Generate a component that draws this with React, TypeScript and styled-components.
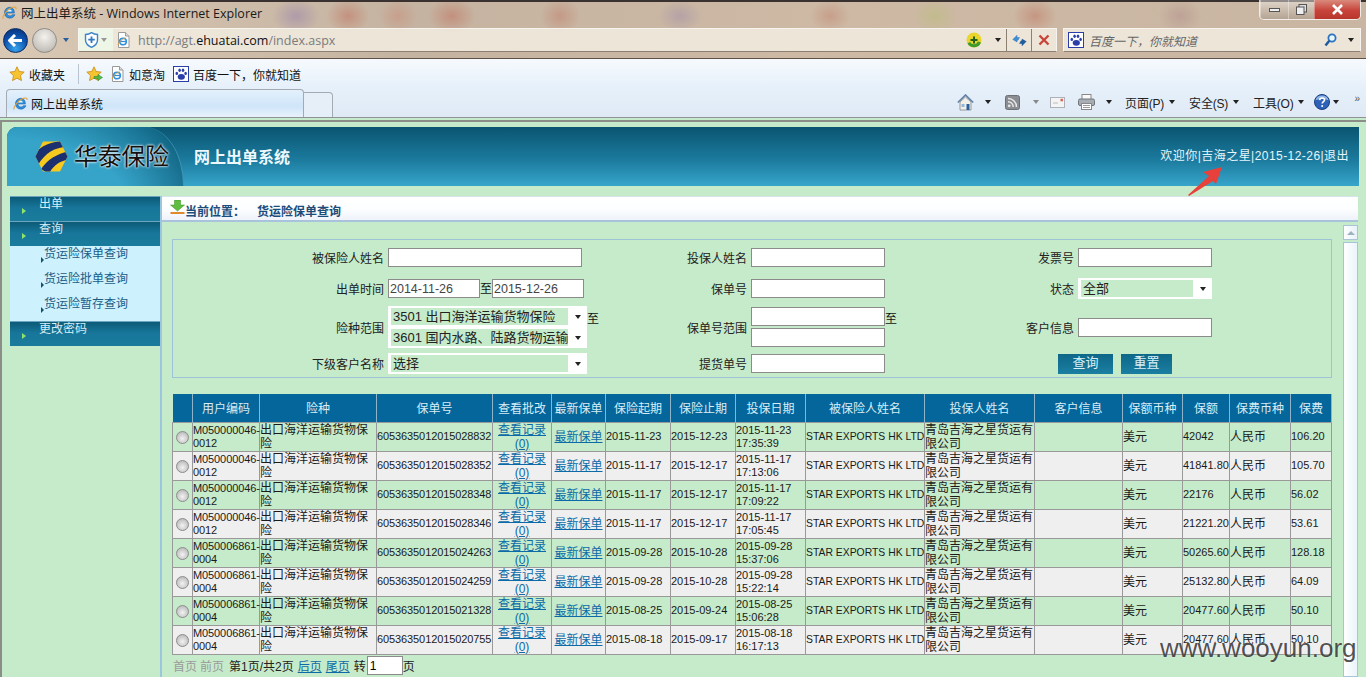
import React from 'react'
import styled, { createGlobalStyle } from 'styled-components'

const CJK = '"Liberation Sans", "Noto Sans CJK SC", sans-serif'

const GlobalStyle = createGlobalStyle`
  html, body {
    margin: 0;
    padding: 0;
    background: #c6ebca;
    overflow: hidden;
  }
  * {
    box-sizing: border-box;
  }
`

const Screen = styled.div`
  position: relative;
  width: 1366px;
  height: 677px;
  overflow: hidden;
  display: flex;
  flex-direction: column;
  font-family: ${CJK};
  font-size: 12px;
  color: #111;
`

/* ---------- browser chrome ---------- */

const AeroArea = styled.div`
  height: 59px;
  border-top: 2px solid #3a3230;
  border-bottom: 1px solid #5e5248;
  display: flex;
  flex-direction: column;
  background:
    radial-gradient(ellipse 24px 18px at 296px 14px, rgba(150, 130, 170, 0.55), transparent),
    radial-gradient(ellipse 22px 18px at 348px 14px, rgba(190, 110, 90, 0.5), transparent),
    radial-gradient(ellipse 20px 18px at 398px 14px, rgba(200, 130, 110, 0.4), transparent),
    radial-gradient(ellipse 24px 18px at 452px 14px, rgba(190, 110, 90, 0.5), transparent),
    radial-gradient(ellipse 20px 18px at 560px 14px, rgba(190, 120, 100, 0.45), transparent),
    radial-gradient(ellipse 22px 16px at 680px 14px, rgba(150, 130, 170, 0.4), transparent),
    radial-gradient(ellipse 20px 16px at 830px 14px, rgba(190, 120, 100, 0.4), transparent),
    radial-gradient(ellipse 22px 18px at 935px 14px, rgba(185, 190, 120, 0.5), transparent),
    radial-gradient(ellipse 22px 18px at 1035px 14px, rgba(190, 110, 90, 0.45), transparent),
    radial-gradient(ellipse 22px 18px at 1180px 14px, rgba(170, 130, 130, 0.4), transparent),
    linear-gradient(90deg, #d9c8b4 0%, #c5b3a1 30%, #cdb9a4 60%, #c9b6a2 100%);
`

const TitleRow = styled.div`
  height: 24px;
  display: flex;
  align-items: flex-start;
  padding-left: 2px;
`

const TitleMain = styled.div`
  display: flex;
  align-items: center;
  height: 21px;
  gap: 4px;
  font-family: "Open Sans", "Noto Sans CJK SC", sans-serif;
  font-size: 12.5px;
  color: #1a1a1a;
`

const WindowButtons = styled.div`
  margin-left: auto;
  margin-right: 5px;
  margin-top: -2px;
  display: flex;
  height: 20px;
  border: 1px solid rgba(255, 255, 255, 0.75);
  border-top: none;
  border-radius: 0 0 5px 5px;
  overflow: hidden;
`

const WindowButton = styled.div<{ $w: number; $close?: boolean }>`
  width: ${({ $w }) => $w}px;
  display: flex;
  align-items: center;
  justify-content: center;
  border-left: 1px solid rgba(255, 255, 255, 0.35);
  background: ${({ $close }) =>
    $close
      ? 'linear-gradient(#d98a7c, #c8443a 55%, #b8362c)'
      : 'linear-gradient(rgba(255,255,255,0.45), rgba(160,145,130,0.5))'};
`

const NavRow = styled.div`
  height: 32px;
  display: flex;
  align-items: center;
  padding: 0 2px 4px 3px;
`

const RoundButton = styled.div<{ $grey?: boolean; $ml?: number }>`
  width: 25px;
  height: 25px;
  margin-left: ${({ $ml }) => $ml ?? 0}px;
  border-radius: 50%;
  display: flex;
  align-items: center;
  justify-content: center;
  border: 1px solid ${({ $grey }) => ($grey ? '#8f8c88' : '#0c2a66')};
  background: ${({ $grey }) =>
    $grey
      ? 'radial-gradient(circle at 50% 35%, #f4f2ee, #c6c2bc 70%, #a8a49e)'
      : 'radial-gradient(circle at 50% 85%, #38a4ea, #0c50ac 55%, #082c6c)'};
`

const Caret = styled.span<{ $ml?: number; $mr?: number; $c?: string }>`
  flex: none;
  width: 0;
  height: 0;
  margin-left: ${({ $ml }) => $ml ?? 0}px;
  margin-right: ${({ $mr }) => $mr ?? 0}px;
  border-left: 3.5px solid transparent;
  border-right: 3.5px solid transparent;
  border-top: 4px solid ${({ $c }) => $c ?? '#222'};
`

const AddressBox = styled.div`
  width: 979px;
  height: 24px;
  margin-left: 9px;
  display: flex;
  align-items: center;
  background: rgba(240, 234, 222, 0.9);
  border: 1px solid #fff9;
  border-bottom-color: #8d8072;
`

const ShieldCell = styled.div`
  width: 34px;
  height: 100%;
  display: flex;
  align-items: center;
  gap: 2px;
  padding-left: 5px;
  background: #eef6e8;
`

const UrlText = styled.span`
  margin-left: 7px;
  font-family: "Open Sans", sans-serif;
  font-size: 12.5px;
  color: #7b7b7b;

  b {
    font-weight: 400;
    color: #111;
  }
`

const AddressCell = styled.div<{ $w: number }>`
  width: ${({ $w }) => $w}px;
  height: 100%;
  display: flex;
  align-items: center;
  justify-content: center;
  border-left: 1px solid #8d8072;
`

const PlainSpot = styled.div`
  margin-left: auto;
  display: flex;
  align-items: center;
  gap: 13px;
  margin-right: 5px;
`

const SearchBox = styled.div`
  width: 298px;
  height: 24px;
  margin-left: 6px;
  display: flex;
  align-items: center;
  padding: 0 6px 0 4px;
  background: rgba(240, 234, 222, 0.9);
  border: 1px solid #fff9;
  border-bottom-color: #8d8072;
`

const SearchHint = styled.span`
  margin-left: 5px;
  font-style: italic;
  font-size: 12px;
  color: #666;
`

const SearchTools = styled.div`
  margin-left: auto;
  display: flex;
  align-items: center;
  gap: 11px;
`

const ToolArea = styled.div`
  height: 59px;
  display: flex;
  flex-direction: column;
  background: linear-gradient(#f6fafe, #e6f0fa 50%, #dfeaf6);
  border-bottom: 1px solid #8f9296;
`

const FavRow = styled.div`
  height: 30px;
  display: flex;
  align-items: center;
  padding-left: 9px;
`

const FavText = styled.span<{ $ml: number }>`
  margin-left: ${({ $ml }) => $ml}px;
  font-size: 12px;
  white-space: nowrap;
`

const FavIcon = styled.span<{ $ml?: number }>`
  display: flex;
  margin-left: ${({ $ml }) => $ml ?? 0}px;
`

const FavSep = styled.span`
  width: 1px;
  height: 20px;
  margin-left: 13px;
  background: #b9c4cf;
`

const TabRow = styled.div`
  flex: 1;
  display: flex;
  align-items: flex-end;
  padding-left: 6px;
`

const ActiveTab = styled.div`
  width: 298px;
  height: 28px;
  display: flex;
  align-items: center;
  gap: 3px;
  padding-left: 6px;
  border: 1px solid #a3aab2;
  border-bottom: none;
  border-radius: 4px 4px 0 0;
  background: linear-gradient(#e4f1fc, #cfe5f9 60%, #e8f2fb);
`

const NewTab = styled.div`
  width: 29px;
  height: 25px;
  border: 1px solid #a3aab2;
  border-bottom: none;
  border-left: none;
  border-radius: 0 4px 0 0;
  background: #e6eff8;
`

const CommandBar = styled.div`
  margin-left: auto;
  height: 100%;
  display: flex;
  align-items: center;
  padding: 0 6px 2px 0;
`

const CommandText = styled.span<{ $ml: number }>`
  margin-left: ${({ $ml }) => $ml}px;
  white-space: nowrap;
  font-size: 12px;
  letter-spacing: -0.2px;
  color: #222;
`

const More = styled.span`
  margin-left: 15px;
  margin-top: -8px;
  font-size: 10px;
  color: #555;
`

/* ---------- page ---------- */

const Page = styled.div`
  flex: 1;
  min-height: 0;
  margin-top: 2px;
  padding: 5px 7px 0 5px;
  border-top: 2px solid #8a8d88;
  border-left: 2px solid #8a8d88;
  background: #c6ebca;
  display: flex;
  flex-direction: column;
`

const Banner = styled.header`
  height: 59px;
  flex: none;
  display: flex;
  border-radius: 10px 0 0 0;
  overflow: hidden;
  background: linear-gradient(#0a5570, #1b7a9d 55%, #37a5ca);
`

const BannerLogo = styled.div`
  width: 177px;
  display: flex;
  align-items: center;
  padding-left: 28px;
  gap: 6px;
  background:
    radial-gradient(ellipse 210px 130px at 0 90px, #36a3c8 60%, transparent 99%),
    linear-gradient(100deg, #1a7fa3, #0f5f7d);
  border-right: 1px solid #3f96b6;
  border-radius: 0 40px 0 0 / 0 60px 0 0;
`

const LogoText = styled.span`
  font-size: 24px;
  line-height: 30px;
  letter-spacing: -0.3px;
  color: #111;
  text-shadow: 0 0 3px #fff, 0 0 2px #fff;
  white-space: nowrap;
`

const BannerTitle = styled.h1`
  margin: 0 0 1px 10px;
  align-self: center;
  font-size: 16px;
  font-weight: 700;
  color: #eef8fc;
`

const Welcome = styled.div`
  margin-left: auto;
  margin-right: 10px;
  margin-top: 22px;
  font-size: 12px;
  line-height: 14px;
  letter-spacing: 0.45px;
  color: #e6f5fb;
  white-space: nowrap;
`

const PageBody = styled.div`
  flex: 1;
  min-height: 0;
  margin-top: 10px;
  display: flex;
`

const Sidebar = styled.nav`
  width: 155px;
  flex: none;
  padding-left: 3px;
  border-right: 2px solid #9cc6de;
`

const NavItem = styled.div`
  height: 25px;
  display: flex;
  align-items: flex-start;
  gap: 13px;
  padding-left: 12px;
  color: #d7eef7;
  line-height: 14px;
  background: linear-gradient(#0c5a77, #17769a 45%, #1a7c9c);
  border-top: 1px solid #6ba5bf;
`

const NavBullet = styled.span`
  width: 0;
  height: 0;
  margin-top: 11px;
  border-top: 3px solid transparent;
  border-bottom: 3px solid transparent;
  border-left: 4px solid #8fe36a;
`

const SubMenu = styled.div`
  height: 75px;
  padding-top: 1px;
  background: #cdf2fe;
`

const SubItem = styled.div`
  height: 25px;
  display: flex;
  align-items: flex-start;
  padding-left: 31px;
  line-height: 14px;
  color: #1b5c86;
`

const SubBullet = styled.span`
  width: 0;
  height: 0;
  margin-top: 10px;
  border-top: 3px solid transparent;
  border-bottom: 3px solid transparent;
  border-left: 3px solid #16506e;
`

const Main = styled.main`
  width: 1196px;
  flex: none;
  display: flex;
  flex-direction: column;
`

const Breadcrumb = styled.div`
  height: 26px;
  flex: none;
  display: flex;
  align-items: center;
  padding: 3px 0 0 8px;
  background: linear-gradient(#fff, #fdfeff 50%, #eef3fa);
  border-bottom: 2px solid #a9c3dc;
  border-top: 1px solid #d5e4e6;
  font-weight: 700;
  color: #1c4c7a;
`

const CrumbLabel = styled.span`
  margin-right: 12px;
`

const MainRow = styled.div`
  flex: 1;
  min-height: 0;
  display: flex;
`

const Content = styled.div`
  width: 1181px;
  padding: 17px 0 0 10px;
`

const FormPanel = styled.div`
  width: 1160px;
  height: 139px;
  padding-top: 2px;
  border: 1px solid #9cc3d8;
  display: grid;
  grid-template-columns: 211px 262px 93px 249px 70px 1fr;
  grid-template-rows: 31px 31px 46px 27px;
  column-gap: 4px;
  align-items: center;
`

const Label = styled.label`
  text-align: right;
  white-space: nowrap;
  color: #222;
`

const TextInput = styled.input<{ $w: number }>`
  display: block;
  width: ${({ $w }) => $w}px;
  height: 19px;
  padding: 0 1px;
  border: 1px solid #8b8b8b;
  background: #fff;
  font-family: "Liberation Sans", sans-serif;
  font-size: 12.5px;
  color: #444;
  outline: none;
`

const FieldRow = styled.div`
  display: flex;
  align-items: center;
`

const FieldStack = styled.div<{ $gap?: number }>`
  display: flex;
  flex-direction: column;
  gap: ${({ $gap }) => $gap ?? 0}px;
`

const StackRow = styled.div`
  display: flex;
  align-items: center;
`

const ToMark = styled.span<{ $raised?: boolean }>`
  width: 12px;
  flex: none;
  line-height: 12px;
  margin-bottom: ${({ $raised }) => ($raised ? '16px' : '0')};
`

const SelectBox = styled.div<{ $w: number }>`
  width: ${({ $w }) => $w}px;
  height: 21px;
  flex: none;
  display: flex;
  align-items: center;
  padding: 2px 0 2px 3px;
  background: #fff;
`

const SelectValue = styled.div`
  flex: 1;
  height: 100%;
  padding-left: 2px;
  overflow: hidden;
  white-space: nowrap;
  font-size: 13px;
  line-height: 17px;
  background: #c6ebca;
  color: #222;
`

const SelectArrow = styled.div`
  width: 19px;
  flex: none;
  display: flex;
  justify-content: center;
`

const ButtonCell = styled.div`
  grid-column: 5 / span 2;
  display: flex;
  gap: 8px;
  padding-left: 54px;
`

const FormButton = styled.button<{ $w: number }>`
  width: ${({ $w }) => $w}px;
  height: 20px;
  padding: 0 0 2px;
  border: none;
  background: linear-gradient(#0f6788, #1a7fa2);
  font-family: ${CJK};
  font-size: 13px;
  line-height: 16px;
  color: #d9f0f8;
`

const Grid = styled.table`
  width: 1159px;
  margin: 16px 0 0 0;
  table-layout: fixed;
  border-collapse: collapse;
`

const HeadCell = styled.th`
  height: 28px;
  padding: 0 0 1px;
  background: #04669a;
  border-right: 1px solid #8db4cb;
  font-weight: 400;
  font-size: 12px;
  color: #d8edf7;
`

const DataRow = styled.tr<{ $even: boolean }>`
  height: 29px;
  background: ${({ $even }) => ($even ? '#f0eff0' : '#c6ebca')};
`

const Cell = styled.td<{ $center?: boolean }>`
  height: 29px;
  padding: 0;
  border: 1px solid #999;
  text-align: ${({ $center }) => ($center ? 'center' : 'left')};
  font-size: 12px;
  line-height: 14px;
  color: #1a1a1a;
`

const LatinCell = styled(Cell)<{ $size?: number; $tight?: boolean }>`
  font-family: "Liberation Sans", sans-serif;
  font-size: ${({ $size }) => $size ?? 11}px;
  line-height: 13px;
  letter-spacing: ${({ $tight }) => ($tight ? '-0.1px' : '0')};
  white-space: nowrap;
`

const RadioMark = styled.input`
  appearance: none;
  display: block;
  width: 13px;
  height: 13px;
  margin: 2px auto 0;
  border-radius: 50%;
  border: 1px solid #8e8e8e;
  background: radial-gradient(circle at 50% 60%, #f2f2f2, #c2c2c2 70%, #a8a8a8);
`

const TableLink = styled.a`
  color: #0c6aa6;
  text-decoration: underline;
  cursor: pointer;
`

const Pager = styled.div`
  height: 22px;
  margin-left: 1px;
  display: flex;
  align-items: center;
  color: #222;
  white-space: nowrap;
`

const PagerDim = styled.span<{ $mr: number }>`
  margin-right: ${({ $mr }) => $mr}px;
  color: #9a9a9a;
`

const PagerText = styled.span<{ $mr: number }>`
  margin-right: ${({ $mr }) => $mr}px;
`

const PagerLink = styled.a`
  margin-right: 4px;
  color: #0c6aa6;
  text-decoration: underline;
`

const PagerInput = styled.input`
  width: 36px;
  height: 19px;
  padding: 0 2px;
  border: 1px solid #8b8b8b;
  font-family: "Liberation Sans", sans-serif;
  font-size: 12px;
  outline: none;
`

const ScrollTrack = styled.div`
  width: 15px;
  margin-top: 3px;
  display: flex;
  flex-direction: column;
  gap: 2px;
`

const ScrollUp = styled.div`
  height: 15px;
  flex: none;
  display: flex;
  align-items: center;
  justify-content: center;
  border: 1px solid #a8c4d8;
  background: linear-gradient(90deg, #fff, #e7f1f8);
`

const UpMark = styled.span`
  width: 0;
  height: 0;
  border-left: 4px solid transparent;
  border-right: 4px solid transparent;
  border-bottom: 4px solid #9cb2bf;
`

const ScrollThumb = styled.div`
  flex: 1;
  border: 1px solid #a8c4d8;
  background: linear-gradient(90deg, #fff, #eaf4fb);
`

const PointerArrow = styled.svg`
  position: absolute;
  left: 1184px;
  top: 163px;
`

const Watermark = styled.div`
  position: absolute;
  left: 1160px;
  top: 633px;
  font-family: "Liberation Sans", sans-serif;
  font-size: 26px;
  line-height: 30px;
  color: rgba(50, 50, 50, 0.85);
  text-shadow: 0 0 2px rgba(255, 255, 255, 0.5);
`

/* ---------- drawings ---------- */

const IeIcon = ({ size = 15 }: { size?: number }) => (
  <svg width={size} height={size} viewBox="0 0 16 16">
    <path d="M13.2 8.6H5.2c.2 2 1.6 3 3.2 3 1.2 0 2-.5 2.6-1.3h2.8C13 12.600 10.900 14 8.400 14 5 14 2.600 11.600 2.600 8.300 2.600 5 5 2.400 8.400 2.400c3 0 4.900 2.400 4.800 6.200z" fill="#2f8fdc" stroke="#14569f" strokeWidth="0.5" />
    <path d="M5.300 6.800h5.100c-.1-1.300-1-2.100-2.500-2.100-1.400 0-2.400.9-2.600 2.100z" fill="#eef7ff" />
    <path d="M1 14.500C.2 12.500 5 4.500 11 2.500c3-1 4.500-.2 3.900 1.800" fill="none" stroke="#e9a02a" strokeWidth="1.100" />
  </svg>
)

const PageIcon = () => (
  <svg width="15" height="16" viewBox="0 0 15 16">
    <path d="M2.500 .5h7l3.500 3.500v11.500h-10.500z" fill="#fdfdfd" stroke="#9a9a9a" />
    <path d="M9.500 .5v3.500h3.500" fill="#dcdcdc" stroke="#9a9a9a" />
    <circle cx="7" cy="9.500" r="3.300" fill="none" stroke="#2f8fdc" strokeWidth="1.600" />
    <path d="M4 9.500h6" stroke="#2f8fdc" strokeWidth="1.200" />
    <path d="M2 13c1-3 5-7 8-7" fill="none" stroke="#e9a02a" strokeWidth="0.900" />
  </svg>
)

const StarIcon = ({ withArrow }: { withArrow?: boolean }) => (
  <svg width="17" height="16" viewBox="0 0 17 16">
    <path d="M8 .8l2.200 4.700 5 .6-3.700 3.500 1 5L8 12.200l-4.500 2.400 1-5L.8 6.100l5-.6z" fill="#f6c431" stroke="#c98a14" strokeWidth="0.800" />
    {withArrow && <path d="M8 10.500h4V8.500l4.500 3-4.500 3v-2H8z" fill="#55b848" stroke="#2d7f2a" strokeWidth="0.500" />}
  </svg>
)

const BaiduIcon = () => (
  <svg width="16" height="16" viewBox="0 0 16 16">
    <rect x=".5" y=".5" width="15" height="15" fill="#fff" stroke="#2a3ea8" />
    <ellipse cx="8.300" cy="10.800" rx="3.600" ry="2.900" fill="#2a3ea8" />
    <ellipse cx="3.800" cy="7.400" rx="1.300" ry="1.700" fill="#2a3ea8" />
    <ellipse cx="6.600" cy="4.300" rx="1.300" ry="1.800" fill="#2a3ea8" />
    <ellipse cx="10" cy="4.300" rx="1.300" ry="1.800" fill="#2a3ea8" />
    <ellipse cx="12.600" cy="7.400" rx="1.300" ry="1.700" fill="#2a3ea8" />
  </svg>
)

const Shield = () => (
  <svg width="15" height="16" viewBox="0 0 15 16">
    <path d="M1.500 2.500c2 0 4.500-.8 6-1.800 1.500 1 4 1.800 6 1.800v5.500c0 3.500-3 6-6 7.300-3-1.300-6-3.800-6-7.300z" fill="#fff" stroke="#3d84c8" strokeWidth="1.400" />
    <path d="M7.500 4.500v6.500M4.300 7.700h6.500" stroke="#2f78c4" strokeWidth="1.800" />
  </svg>
)

const GreenPlus = () => (
  <svg width="16" height="16" viewBox="0 0 16 16">
    <circle cx="8" cy="8" r="7.500" fill="#e9d52c" />
    <path d="M1.500 11.500A7.500 7.500 0 0 0 15 10.500L12 9.500A4.500 4.500 0 0 1 4 10z" fill="#3d9b2e" />
    <path d="M8 4.500v7M4.500 8h7" stroke="#23601c" strokeWidth="2" />
  </svg>
)

const RefreshIcon = () => (
  <svg width="15" height="13" viewBox="0 0 15 13">
    <path d="M.8 5.500L5 1.200v2.300h2.500L6 6.200H5V8z" fill="#3f8fd6" stroke="#2a6aaa" strokeWidth="0.400" />
    <path d="M14.200 7.500L10 11.800V9.500H7.500L9 6.800H10V5z" fill="#1f5f9f" stroke="#1a4a80" strokeWidth="0.400" />
  </svg>
)

const CrossIcon = () => (
  <svg width="12" height="12" viewBox="0 0 12 12">
    <path d="M1.500 1.500l9 9M10.500 1.500l-9 9" stroke="#c9453a" strokeWidth="2.400" />
  </svg>
)

const SearchGlass = () => (
  <svg width="13" height="14" viewBox="0 0 13 14">
    <circle cx="8" cy="5" r="3.600" fill="#eaf4fc" stroke="#2b74c0" strokeWidth="1.800" />
    <path d="M5.300 7.800L1.500 12.500" stroke="#1c5a9e" strokeWidth="2.400" />
  </svg>
)

const HomeIcon = () => (
  <svg width="17" height="17" viewBox="0 0 17 17">
    <path d="M3 8v8h11V8L8.500 3z" fill="#f2efe6" stroke="#7d8791" strokeWidth="0.800" />
    <path d="M.8 8.500L8.500 1l7.700 7.500" fill="none" stroke="#5f7fa6" strokeWidth="1.600" />
    <rect x="9.500" y="10" width="3" height="6" fill="#2a5f9e" />
    <rect x="4.500" y="10" width="3" height="3" fill="#8db7df" />
  </svg>
)

const RssIcon = () => (
  <svg width="15" height="15" viewBox="0 0 15 15">
    <rect x=".5" y=".5" width="14" height="14" rx="2" fill="#8a8e92" stroke="#6d7175" />
    <circle cx="4.200" cy="10.800" r="1.400" fill="#e8e8e8" />
    <path d="M3 6.800a5 5 0 0 1 5.200 5.200M3 3.500a8.300 8.300 0 0 1 8.500 8.500" fill="none" stroke="#e8e8e8" strokeWidth="1.500" />
  </svg>
)

const MailIcon = () => (
  <svg width="15" height="11" viewBox="0 0 15 11">
    <rect x=".5" y=".5" width="14" height="10" fill="#f4f4f4" stroke="#aeb2b6" />
    <rect x="3" y="5.500" width="5" height="1" fill="#bbb" />
    <rect x="10.500" y="1.800" width="2.500" height="2.500" fill="#d8655a" />
  </svg>
)

const PrintIcon = () => (
  <svg width="17" height="16" viewBox="0 0 17 16">
    <rect x="4" y=".5" width="9" height="5" fill="#fafafa" stroke="#888" />
    <rect x=".5" y="5" width="16" height="6.500" rx="1.500" fill="#a7adb3" stroke="#70767c" />
    <rect x="3.500" y="9.500" width="10" height="6" fill="#fff" stroke="#888" />
    <path d="M5 11.500h7M5 13.500h7" stroke="#9a9a9a" />
  </svg>
)

const HelpIcon = () => (
  <svg width="16" height="16" viewBox="0 0 16 16">
    <circle cx="8" cy="8" r="7.500" fill="#2d62b8" stroke="#1c3f80" />
    <path d="M1.500 6.500A6.600 6 0 0 1 14.500 6.500C11 4.500 5 4.500 1.500 6.500z" fill="#8fb4e6" />
    <path d="M5.600 6.200c.2-1.500 1.200-2.200 2.500-2.200 1.400 0 2.400.8 2.400 2 0 1.700-2.300 1.800-2.300 3.600" fill="none" stroke="#fff" strokeWidth="1.600" />
    <circle cx="8.200" cy="12" r="1" fill="#fff" />
  </svg>
)

const HexLogo = () => (
  <svg width="33" height="31" viewBox="0 0 33 31">
    <defs>
      <clipPath id="hex">
        <polygon points="8,0.500 25,0.500 32.500,15.500 25,30.500 8,30.500 0.500,15.500" />
      </clipPath>
    </defs>
    <g clipPath="url(#hex)">
      <rect width="33" height="31" fill="#f7c81e" />
      <path d="M-2 15C6 3 18 1 32-1V6C20 6 10 12 3 24z" fill="#1c2f6e" />
      <path d="M6 28C14 17 24 12 36 10V18C26 19 18 24 14 33z" fill="#1c2f6e" />
    </g>
  </svg>
)

const CrumbIconWrap = styled.span`
  display: flex;
  margin-top: -5px;
`

const CrumbIcon = () => (
  <CrumbIconWrap>
    <svg width="15" height="15" viewBox="0 0 15 15">
      <path d="M4.500 0h6v5h4L7.500 11 .5 5h4z" fill="#5fbe3f" stroke="#3b8f2a" strokeWidth="0.500" />
      <rect x="0.500" y="12" width="14" height="2" fill="#e08a2a" />
    </svg>
  </CrumbIconWrap>
)

/* ---------- data ---------- */

const columns = [20, 67, 117, 116, 59, 54, 65, 65, 70, 119, 110, 88, 60, 47, 61, 41]

const headers = [
  '', '用户编码', '险种', '保单号', '查看批改', '最新保单', '保险起期', '保险止期', '投保日期',
  '被保险人姓名', '投保人姓名', '客户信息', '保额币种', '保额', '保费币种', '保费',
]

const policies = [
  { code: ['M050000046-', '0012'], no: '6053635012015028832', from: '2015-11-23', to: '2015-12-23', date: '2015-11-23', time: '17:35:39', amount: '42042', fee: '106.20' },
  { code: ['M050000046-', '0012'], no: '6053635012015028352', from: '2015-11-17', to: '2015-12-17', date: '2015-11-17', time: '17:13:06', amount: '41841.80', fee: '105.70' },
  { code: ['M050000046-', '0012'], no: '6053635012015028348', from: '2015-11-17', to: '2015-12-17', date: '2015-11-17', time: '17:09:22', amount: '22176', fee: '56.02' },
  { code: ['M050000046-', '0012'], no: '6053635012015028346', from: '2015-11-17', to: '2015-12-17', date: '2015-11-17', time: '17:05:45', amount: '21221.20', fee: '53.61' },
  { code: ['M050006861-', '0004'], no: '6053635012015024263', from: '2015-09-28', to: '2015-10-28', date: '2015-09-28', time: '15:37:06', amount: '50265.60', fee: '128.18' },
  { code: ['M050006861-', '0004'], no: '6053635012015024259', from: '2015-09-28', to: '2015-10-28', date: '2015-09-28', time: '15:22:14', amount: '25132.80', fee: '64.09' },
  { code: ['M050006861-', '0004'], no: '6053635012015021328', from: '2015-08-25', to: '2015-09-24', date: '2015-08-25', time: '15:06:28', amount: '20477.60', fee: '50.10' },
  { code: ['M050006861-', '0004'], no: '6053635012015020755', from: '2015-08-18', to: '2015-09-17', date: '2015-08-18', time: '16:17:13', amount: '20477.60', fee: '50.10' },
]

const App = () => (
  <Screen>
    <GlobalStyle />

    <AeroArea>
      <TitleRow>
        <TitleMain>
          <IeIcon />
          网上出单系统 - Windows Internet Explorer
        </TitleMain>
        <WindowButtons>
          <WindowButton $w={28}>
            <svg width="11" height="4" viewBox="0 0 11 4"><rect x=".5" y=".5" width="10" height="3" fill="#eee" stroke="#555" /></svg>
          </WindowButton>
          <WindowButton $w={26}>
            <svg width="11" height="11" viewBox="0 0 11 11"><rect x="3" y=".5" width="7.500" height="7.500" fill="#ddd" stroke="#555" /><rect x=".5" y="3" width="7.500" height="7.500" fill="#eee" stroke="#555" /></svg>
          </WindowButton>
          <WindowButton $w={46} $close>
            <svg width="13" height="11" viewBox="0 0 13 11"><path d="M2 1l9 9M11 1l-9 9" stroke="#fff" strokeWidth="2.600" /></svg>
          </WindowButton>
        </WindowButtons>
      </TitleRow>

      <NavRow>
        <RoundButton>
          <svg width="15" height="13" viewBox="0 0 15 13"><path d="M7 1L1.500 6.500 7 12M2 6.500h12" fill="none" stroke="#fff" strokeWidth="3" /></svg>
        </RoundButton>
        <RoundButton $grey $ml={4} />
        <Caret $ml={6} $c="#2a5f9e" />
        <AddressBox>
          <ShieldCell>
            <Shield />
            <Caret $c="#999" />
          </ShieldCell>
          <FavIcon $ml={3}><PageIcon /></FavIcon>
          <UrlText>http://agt.<b>ehuatai.com</b>/index.aspx</UrlText>
          <PlainSpot>
            <GreenPlus />
            <Caret />
          </PlainSpot>
          <AddressCell $w={25}><RefreshIcon /></AddressCell>
          <AddressCell $w={25}><CrossIcon /></AddressCell>
        </AddressBox>
        <SearchBox>
          <BaiduIcon />
          <SearchHint>百度一下，你就知道</SearchHint>
          <SearchTools>
            <SearchGlass />
            <Caret />
          </SearchTools>
        </SearchBox>
      </NavRow>
    </AeroArea>

    <ToolArea>
      <FavRow>
        <StarIcon />
        <FavText $ml={3}>收藏夹</FavText>
        <FavSep />
        <FavIcon $ml={7}><StarIcon withArrow /></FavIcon>
        <FavIcon $ml={7}><PageIcon /></FavIcon>
        <FavText $ml={4}>如意淘</FavText>
        <FavIcon $ml={8}><BaiduIcon /></FavIcon>
        <FavText $ml={4}>百度一下，你就知道</FavText>
      </FavRow>
      <TabRow>
        <ActiveTab>
          <IeIcon />
          网上出单系统
        </ActiveTab>
        <NewTab />
        <CommandBar>
          <HomeIcon />
          <Caret $ml={11} />
          <FavIcon $ml={14}><RssIcon /></FavIcon>
          <Caret $ml={13} $c="#888" />
          <FavIcon $ml={11}><MailIcon /></FavIcon>
          <FavIcon $ml={13}><PrintIcon /></FavIcon>
          <Caret $ml={11} />
          <CommandText $ml={13}>页面(P)</CommandText>
          <Caret $ml={5} />
          <CommandText $ml={14}>安全(S)</CommandText>
          <Caret $ml={5} />
          <CommandText $ml={14}>工具(O)</CommandText>
          <Caret $ml={5} />
          <FavIcon $ml={10}><HelpIcon /></FavIcon>
          <Caret $ml={3} />
          <More>&raquo;</More>
        </CommandBar>
      </TabRow>
    </ToolArea>

    <Page>
      <Banner>
        <BannerLogo>
          <HexLogo />
          <LogoText>华泰保险</LogoText>
        </BannerLogo>
        <BannerTitle>网上出单系统</BannerTitle>
        <Welcome>欢迎你|吉海之星|2015-12-26|退出</Welcome>
      </Banner>

      <PageBody>
        <Sidebar>
          <NavItem><NavBullet />出单</NavItem>
          <NavItem><NavBullet />查询</NavItem>
          <SubMenu>
            <SubItem><SubBullet />货运险保单查询</SubItem>
            <SubItem><SubBullet />货运险批单查询</SubItem>
            <SubItem><SubBullet />货运险暂存查询</SubItem>
          </SubMenu>
          <NavItem><NavBullet />更改密码</NavItem>
        </Sidebar>

        <Main>
          <Breadcrumb>
            <CrumbIcon />
            <CrumbLabel>当前位置：</CrumbLabel>
            货运险保单查询
          </Breadcrumb>
          <MainRow>
            <Content>
              <FormPanel>
                <Label>被保险人姓名</Label>
                <TextInput $w={194} />
                <Label>投保人姓名</Label>
                <TextInput $w={134} />
                <Label>发票号</Label>
                <TextInput $w={134} />

                <Label>出单时间</Label>
                <FieldRow>
                  <TextInput $w={92} defaultValue="2014-11-26" />
                  <ToMark>至</ToMark>
                  <TextInput $w={92} defaultValue="2015-12-26" />
                </FieldRow>
                <Label>保单号</Label>
                <TextInput $w={134} />
                <Label>状态</Label>
                <SelectBox $w={134}>
                  <SelectValue>全部</SelectValue>
                  <SelectArrow><Caret /></SelectArrow>
                </SelectBox>

                <Label>险种范围</Label>
                <StackRow>
                  <FieldStack>
                    <SelectBox $w={199}>
                      <SelectValue>3501 出口海洋运输货物保险</SelectValue>
                      <SelectArrow><Caret /></SelectArrow>
                    </SelectBox>
                    <SelectBox $w={199}>
                      <SelectValue>3601 国内水路、陆路货物运输</SelectValue>
                      <SelectArrow><Caret /></SelectArrow>
                    </SelectBox>
                  </FieldStack>
                  <ToMark $raised>至</ToMark>
                </StackRow>
                <Label>保单号范围</Label>
                <StackRow>
                  <FieldStack $gap={2}>
                    <TextInput $w={134} />
                    <TextInput $w={134} />
                  </FieldStack>
                  <ToMark $raised>至</ToMark>
                </StackRow>
                <Label>客户信息</Label>
                <TextInput $w={134} />

                <Label>下级客户名称</Label>
                <SelectBox $w={199}>
                  <SelectValue>选择</SelectValue>
                  <SelectArrow><Caret /></SelectArrow>
                </SelectBox>
                <Label>提货单号</Label>
                <TextInput $w={134} />
                <ButtonCell>
                  <FormButton $w={55}>查询</FormButton>
                  <FormButton $w={51}>重置</FormButton>
                </ButtonCell>
              </FormPanel>

              <Grid>
                <colgroup>
                  {columns.map((w, i) => (
                    <col key={i} width={w} />
                  ))}
                </colgroup>
                <thead>
                  <tr>
                    {headers.map((h, i) => (
                      <HeadCell key={i}>{h}</HeadCell>
                    ))}
                  </tr>
                </thead>
                <tbody>
                  {policies.map((p, i) => (
                    <DataRow key={p.no} $even={i % 2 === 1}>
                      <Cell><RadioMark type="radio" name="policy" /></Cell>
                      <LatinCell $tight>{p.code[0]}<br />{p.code[1]}</LatinCell>
                      <Cell>出口海洋运输货物保险</Cell>
                      <LatinCell $tight>{p.no}</LatinCell>
                      <Cell $center><TableLink>查看记录</TableLink><br /><TableLink>(0)</TableLink></Cell>
                      <Cell $center><TableLink>最新保单</TableLink></Cell>
                      <LatinCell>{p.from}</LatinCell>
                      <LatinCell>{p.to}</LatinCell>
                      <LatinCell>{p.date}<br />{p.time}</LatinCell>
                      <LatinCell $size={10.4}>STAR EXPORTS HK LTD</LatinCell>
                      <Cell>青岛吉海之星货运有限公司</Cell>
                      <Cell />
                      <Cell>美元</Cell>
                      <LatinCell>{p.amount}</LatinCell>
                      <Cell>人民币</Cell>
                      <LatinCell>{p.fee}</LatinCell>
                    </DataRow>
                  ))}
                </tbody>
              </Grid>

              <Pager>
                <PagerDim $mr={3}>首页</PagerDim>
                <PagerDim $mr={5}>前页</PagerDim>
                <PagerText $mr={4}>第1页/共2页</PagerText>
                <PagerLink>后页</PagerLink>
                <PagerLink>尾页</PagerLink>
                <PagerText $mr={1}>转</PagerText>
                <PagerInput defaultValue="1" />
                <span>页</span>
              </Pager>
            </Content>
            <ScrollTrack>
              <ScrollUp><UpMark /></ScrollUp>
              <ScrollThumb />
            </ScrollTrack>
          </MainRow>
        </Main>
      </PageBody>
    </Page>

    <PointerArrow width="42" height="36" viewBox="0 0 42 36">
      <path d="M38 4L19 9L25 13L4 32L5 33L29 18L32 21Z" fill="#e8403a" />
    </PointerArrow>
    <Watermark>www.wooyun.org</Watermark>
  </Screen>
)

export default App
